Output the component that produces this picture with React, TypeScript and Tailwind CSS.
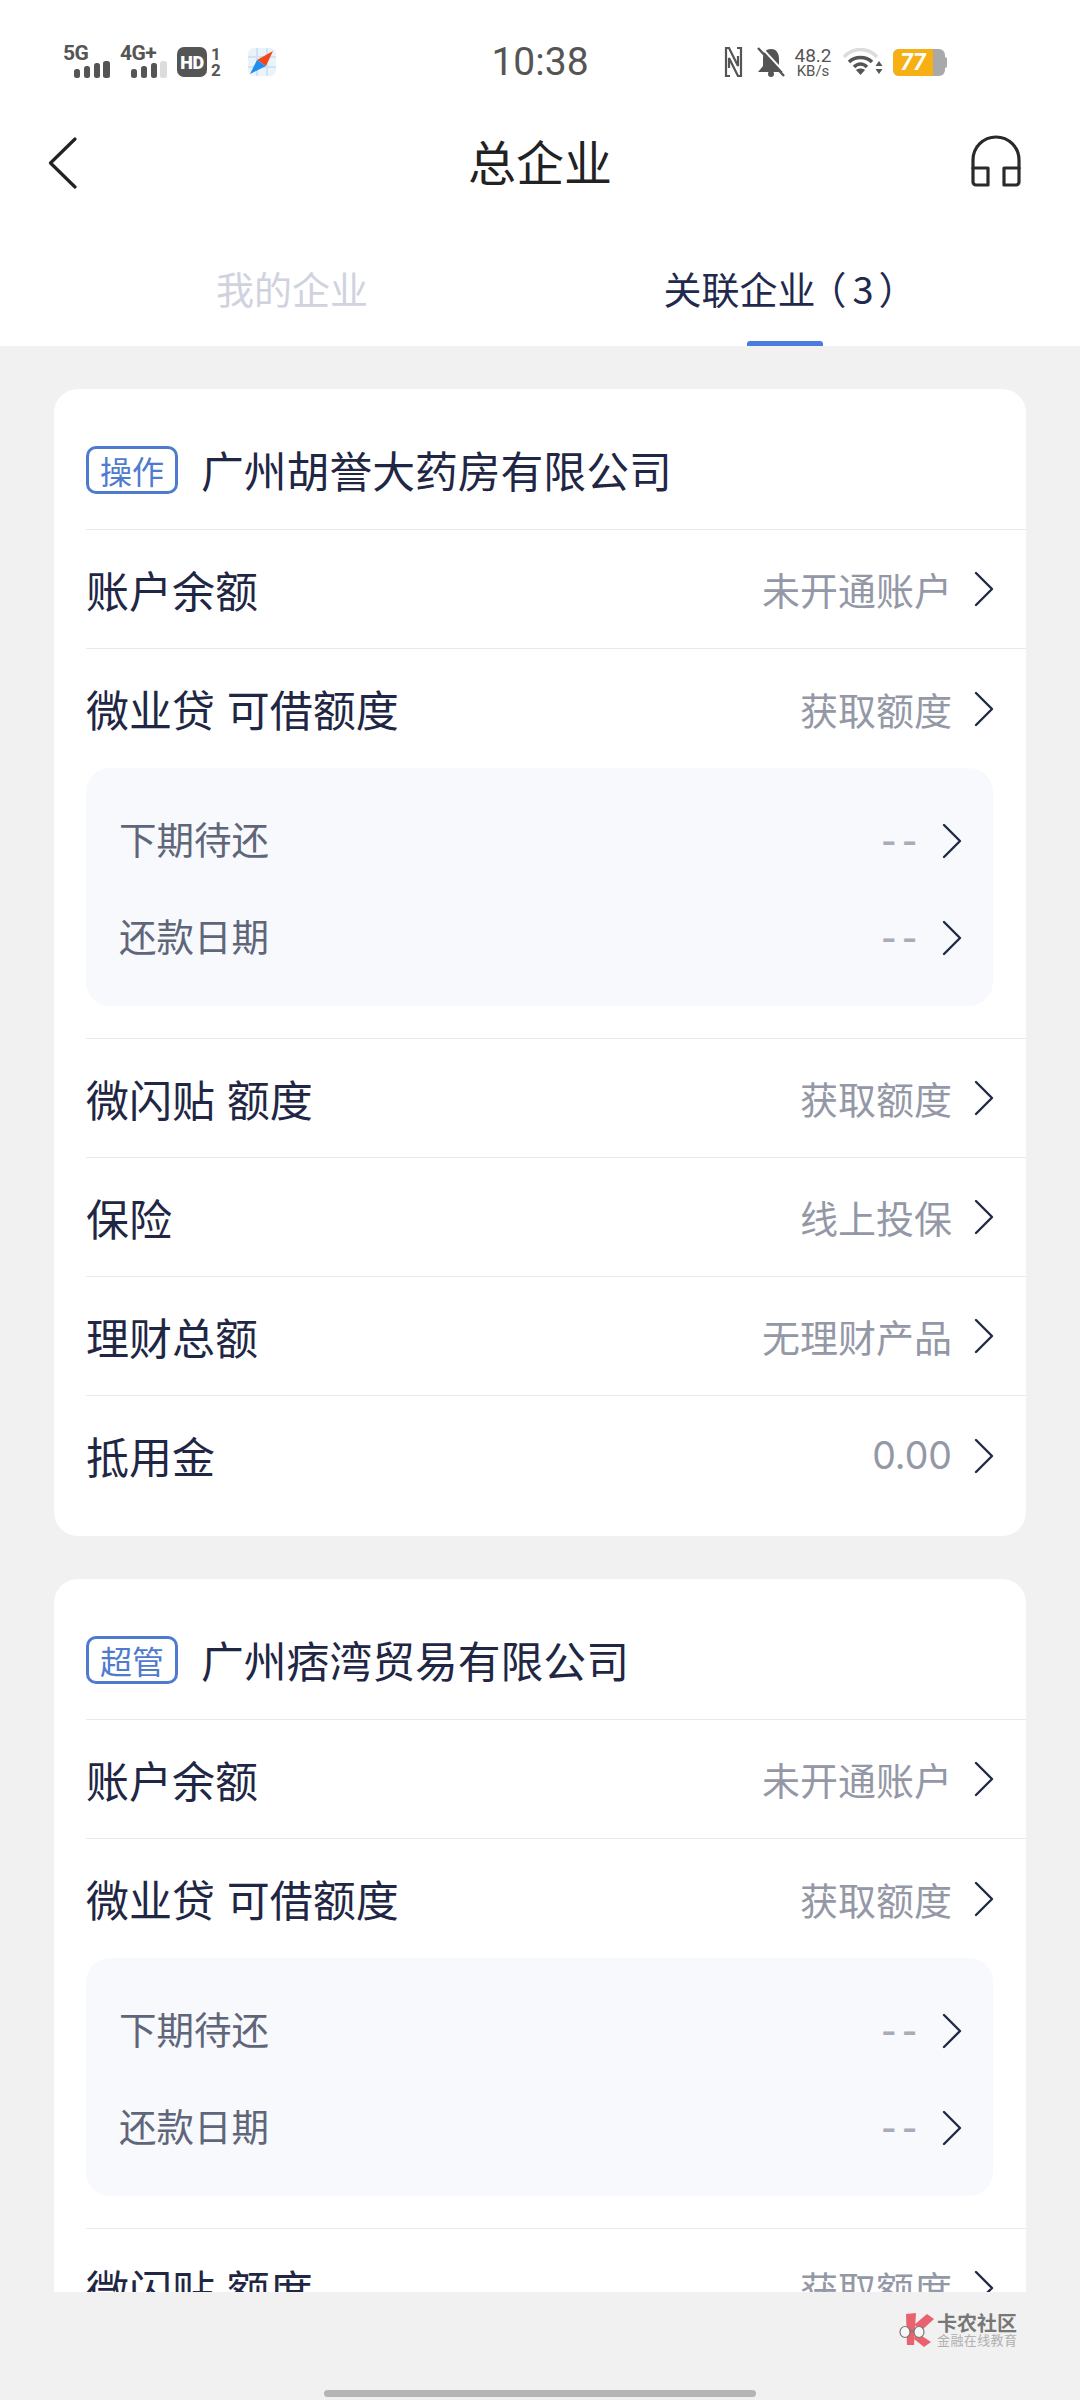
const rows = [
  { label: '微闪贴 额度', value: '获取额度' },
  { label: '保险', value: '线上投保' },
  { label: '理财总额', value: '无理财产品' },
];

function Chevron() {
  return (
    <svg width="20" height="36" viewBox="0 0 20 36" fill="none" className="shrink-0">
      <path d="M2 2 L18 18 L2 34" stroke="#1f2a44" strokeWidth="2.4" strokeLinecap="round" strokeLinejoin="round" />
    </svg>
  );
}

function Signal({ weak }: { weak?: boolean }) {
  return (
    <svg width="36" height="17" viewBox="0 0 36 17" className="self-end">
      <rect x="0" y="8" width="6" height="9" rx="2.5" fill="#555" />
      <rect x="10" y="5" width="6" height="12" rx="2.5" fill="#555" />
      <rect x="20" y="2" width="6" height="15" rx="2.5" fill="#555" />
      <rect x="29" y="0" width="7" height="17" rx="2.5" fill={weak ? '#dcdcdc' : '#555'} />
    </svg>
  );
}

function StatusBar() {
  return (
    <div className="grid h-[124px] grid-cols-[1fr_auto_1fr] items-center text-[#555] font-['Roboto',sans-serif]">
      <div className="flex items-center pl-[63px]">
        <div className="flex w-[47px] flex-col">
          <span className="text-[21px] leading-[15px] font-bold tracking-[-0.5px]">5G</span>
          <Signal />
        </div>
        <div className="ml-[10px] flex w-[47px] flex-col">
          <span className="text-[21px] leading-[15px] font-bold tracking-[-0.5px]">4G+</span>
          <Signal weak />
        </div>
        <div className="ml-[10px] flex h-[30px] w-[30px] items-center justify-center rounded-[7px] bg-[#555] text-[18px] font-black tracking-[-0.5px] text-white">
          HD
        </div>
        <div className="ml-[3px] flex h-[30px] w-[12px] flex-col items-center justify-between text-[17px] leading-[14px] font-bold">
          <span>1</span>
          <span>2</span>
        </div>
        <svg width="30" height="30" viewBox="0 0 30 30" className="ml-[25px]">
          <rect x="1" y="1" width="28" height="28" rx="6" fill="#eaf2fa" />
          <path d="M10 1 V29 M20 1 V29 M1 10 H29 M1 20 H29" stroke="#cfe3f5" strokeWidth="2" />
          <polygon points="26,4 19,19 10,13" fill="#f0481a" />
          <polygon points="3,27 19,19 10,13" fill="#1e8ff0" />
        </svg>
      </div>
      <div className="text-[39px] leading-none">10:38</div>
      <div className="flex items-center justify-end pr-[133px]">
        <svg width="19" height="30" viewBox="0 0 19 30" fill="none">
          <path d="M6 29 H2 V1 H5 L14 19 V9" stroke="#555" strokeWidth="2.2" />
          <path d="M13 1 H17 V29 H14 L5 11 V21" stroke="#555" strokeWidth="2.2" />
        </svg>
        <svg width="28" height="30" viewBox="0 0 28 30" className="ml-[14px]">
          <path d="M14 2 C8 2 6 7 6 12 V19 L1 25 H27 L22 19 V12 C22 7 20 2 14 2 Z" fill="#555" />
          <circle cx="14" cy="27" r="3" fill="#555" />
          <path d="M3 -1 L29 27" stroke="#fff" strokeWidth="2" />
          <path d="M1 1 L27 29" stroke="#555" strokeWidth="2.4" />
        </svg>
        <div className="ml-[9px] flex w-[38px] flex-col items-center">
          <span className="text-[19px] leading-[17px]">48.2</span>
          <span className="text-[15px] leading-[14px]">KB/s</span>
        </div>
        <svg width="40" height="28" viewBox="0 0 40 28" className="ml-[11px]" fill="none">
          <path d="M1 9 C10 -1 25 -1 34 9" stroke="#dcdcdc" strokeWidth="3.5" />
          <path d="M6 14 C12 8 23 8 29 14" stroke="#555" strokeWidth="3.5" />
          <path d="M11 19 C15 15 20 15 24 19" stroke="#555" strokeWidth="3.5" />
          <path d="M13 22 C15 20 20 20 22 22 L17.5 27 Z" fill="#555" />
          <path d="M36 13 L39.5 18 H32.5 Z M32.5 21 H39.5 L36 26 Z" fill="#555" />
        </svg>
        <div className="ml-[10px] flex items-center">
          <div className="flex h-[27px] w-[52px] overflow-hidden rounded-[6px] bg-[#a9a9a9]">
            <div className="flex w-[40px] items-center justify-center bg-[#f7b014] text-[23px] leading-none font-bold text-white italic">
              77
            </div>
          </div>
          <div className="h-[11px] w-[2px] rounded-r-[2px] bg-[#a9a9a9]" />
        </div>
      </div>
    </div>
  );
}

function Header() {
  return (
    <div className="bg-white">
      <StatusBar />
      <div className="grid h-[78px] grid-cols-[1fr_auto_1fr] items-center">
        <div className="pl-[48px]">
          <svg width="29" height="52" viewBox="0 0 29 52" fill="none">
            <path d="M27 2 L2.5 26 L27 50" stroke="#222" strokeWidth="3.2" strokeLinecap="round" strokeLinejoin="round" />
          </svg>
        </div>
        <div className="pb-[7px] text-[48px] leading-none text-[#222]">总企业</div>
        <div className="flex justify-end pr-[59px] pb-[5px]">
          <svg width="50" height="52" viewBox="0 0 50 52" fill="none" stroke="#2a2a2a" strokeWidth="3.2">
            <path d="M2 34 V25 a23 23 0 0 1 46 0 V34" />
            <path d="M2 33 H17 V50 H5 a3 3 0 0 1 -3 -3 Z" strokeLinejoin="round" />
            <path d="M48 33 H33 V50 H45 a3 3 0 0 0 3 -3 Z" strokeLinejoin="round" />
          </svg>
        </div>
      </div>
      <div className="grid h-[144px] grid-cols-2 px-[44px]">
        <div className="flex justify-center pt-[59px] text-[38px] leading-[54px] text-[#d0d3de]">我的企业</div>
        <div className="relative flex justify-center pt-[59px] pl-[4px] text-[38px] leading-[54px] text-[#1f2a4d]">
          <span>关联企业</span>
          <span className="-ml-[7px]">（</span>
          <span className="mr-[5px] ml-[6px]">3</span>
          <span>）</span>
          <div className="absolute bottom-0 left-[207px] h-[5px] w-[76px] rounded-t-[3px] bg-[#4a7be0]" />
        </div>
      </div>
    </div>
  );
}

function Row({ label, value, tall }: { label: string; value: string; tall?: boolean }) {
  return (
    <div className={`flex h-[119px] items-center justify-between pr-[32px] ${tall ? '' : 'border-b border-[#e9eaee]'}`}>
      <span className="text-[43px] leading-none text-[#1f2745] [word-spacing:2px]">{label}</span>
      <div className="flex items-center gap-[22px]">
        <span className="text-[38px] leading-none text-[#9498a6]">{value}</span>
        <Chevron />
      </div>
    </div>
  );
}

function SubRow({ label }: { label: string }) {
  return (
    <div className="flex h-[97px] items-center justify-between">
      <span className="pb-[5px] text-[37.5px] leading-none text-[#5f6679]">{label}</span>
      <div className="flex items-center gap-[18px]">
        <span className="font-['Roboto',sans-serif] text-[46px] leading-none tracking-[8px] text-[#a8acb8]">--</span>
        <Chevron />
      </div>
    </div>
  );
}

function CompanyCard({ tag, name }: { tag: string; name: string }) {
  return (
    <div className="shrink-0 rounded-[24px] bg-white pb-[21px] pl-[32px]">
      <div className="flex h-[141px] items-center gap-[23px] border-b border-[#e9eaee] pt-[21px]">
        <div className="flex h-[48px] w-[92px] items-center justify-center rounded-[10px] border-[3px] border-[#4f7bcf] text-[32px] leading-none text-[#4f7bcf]">
          {tag}
        </div>
        <span className="text-[42.8px] leading-none text-[#1f2745]">{name}</span>
      </div>
      <Row label="账户余额" value="未开通账户" />
      <Row label="微业贷 可借额度" value="获取额度" tall />
      <div className="border-b border-[#e9eaee] pr-[33px] pb-[32px]">
        <div className="rounded-[24px] bg-[#f8f9fc] pt-[24px] pr-[31px] pb-[20px] pl-[33px]">
          <SubRow label="下期待还" />
          <SubRow label="还款日期" />
        </div>
      </div>
      {rows.map((r) => (
        <Row key={r.label} label={r.label} value={r.value} />
      ))}
      <div className="flex h-[119px] items-center justify-between pr-[32px]">
        <span className="text-[43px] leading-none text-[#1f2745]">抵用金</span>
        <div className="flex items-center gap-[22px]">
          <span className="font-['Inter',sans-serif] text-[37.5px] leading-none text-[#9498a6]">0.00</span>
          <Chevron />
        </div>
      </div>
    </div>
  );
}

function Watermark() {
  return (
    <div className="absolute top-[20px] left-[899px] flex items-center gap-[1px]">
      <svg width="37" height="36" viewBox="0 0 37 36">
        <polygon points="7,2 17,1 15,33 8,33" fill="#e8636f" />
        <polygon points="15,13 28,2 35,7 23,18" fill="#e8636f" />
        <polygon points="17,20 32,30 25,35 15,27" fill="#e8636f" />
        <ellipse cx="6" cy="20" rx="5" ry="5.5" fill="#f7f7f7" stroke="#777" strokeWidth="1.2" />
        <ellipse cx="20" cy="20" rx="5" ry="5.5" fill="#f7f7f7" stroke="#777" strokeWidth="1.2" />
        <path d="M11 19 H15" stroke="#777" strokeWidth="1.2" />
      </svg>
      <div className="flex flex-col">
        <span className="text-[20px] leading-[20px] font-bold text-[#777]">卡农社区</span>
        <span className="text-[13px] leading-[14px] tracking-[0.4px] text-[#b0b0b0]">金融在线教育</span>
      </div>
    </div>
  );
}

export default function App() {
  return (
    <div className="flex h-[2400px] w-[1080px] flex-col overflow-hidden bg-[#f1f1f1] font-['Noto_Sans_CJK_SC','Noto_Sans',sans-serif]">
      <Header />
      <div className="flex min-h-0 flex-1 flex-col gap-[43px] overflow-hidden px-[54px] pt-[43px]">
        <CompanyCard tag="操作" name="广州胡誉大药房有限公司" />
        <CompanyCard tag="超管" name="广州痞湾贸易有限公司" />
      </div>
      <div className="relative flex h-[108px] shrink-0 flex-col items-center justify-end pb-[3px]">
        <Watermark />
        <div className="h-[7px] w-[432px] rounded-full bg-[#b5b5b5]" />
      </div>
    </div>
  );
}
